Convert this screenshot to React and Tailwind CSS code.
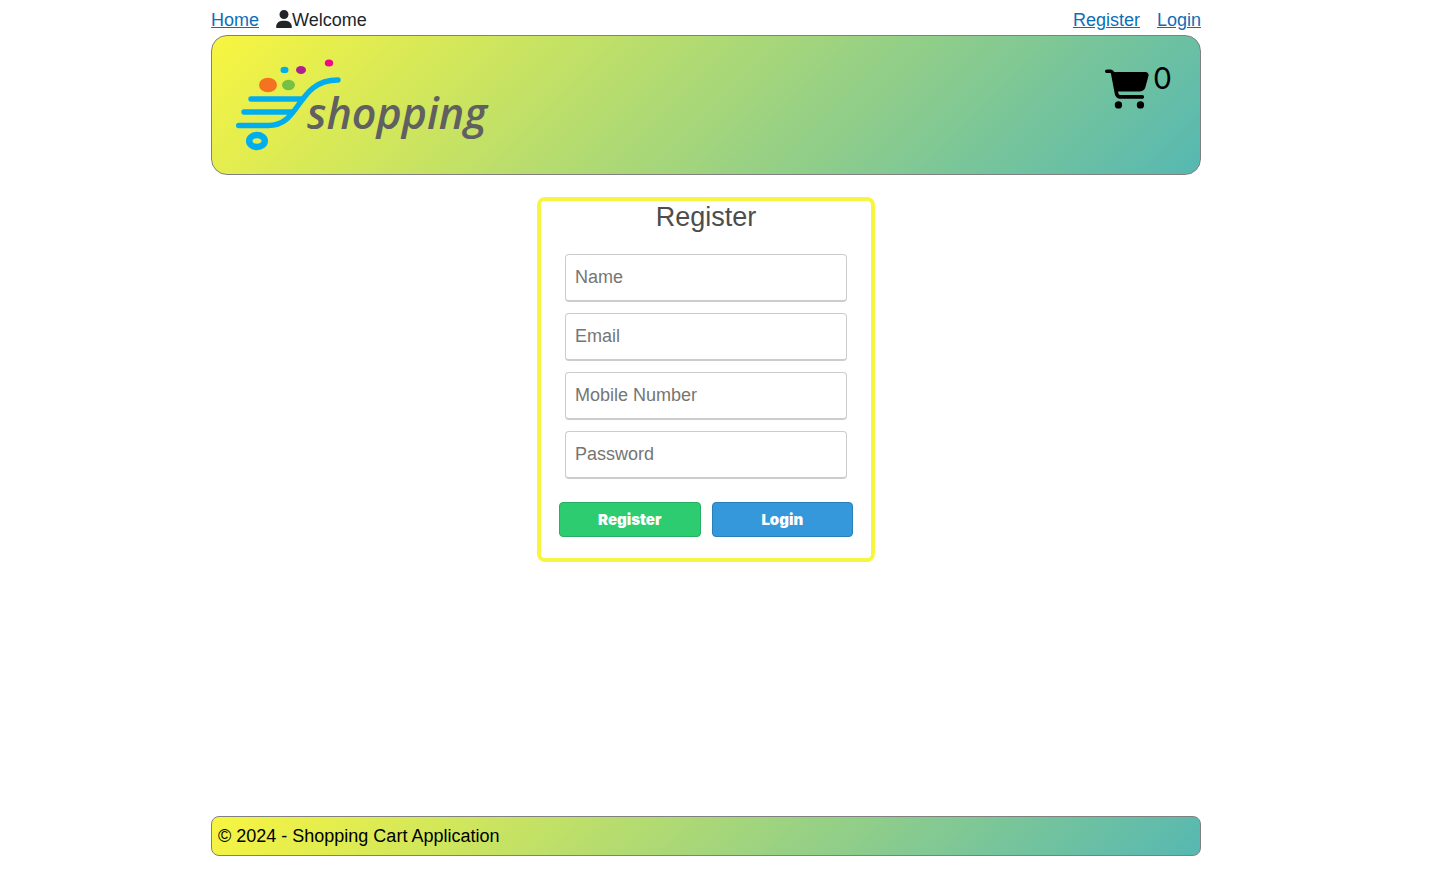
import { FaCartShopping, FaUser } from "react-icons/fa6";

function Logo() {
  return (
    <svg viewBox="0 0 264 104" className="h-[104px] w-[264px]" role="img" aria-label="shopping">
      <g fill="none" stroke="#00aeef" strokeWidth="5.400" strokeLinecap="round">
        <path d="M15 45H67M8 58H57M2.700 71.500H32C66 71.500 60 26 102 26" />
      </g>
      <ellipse cx="21" cy="87" rx="7.800" ry="6" fill="none" stroke="#00aeef" strokeWidth="6.500" />
      <ellipse cx="32" cy="31" rx="9" ry="7.300" fill="#f47321" />
      <ellipse cx="52.500" cy="31" rx="6.500" ry="5.300" fill="#76c043" />
      <ellipse cx="48.500" cy="16" rx="4" ry="3.300" fill="#00aeef" />
      <ellipse cx="65" cy="16" rx="5" ry="4" fill="#b01f8f" />
      <ellipse cx="93" cy="9" rx="4.200" ry="3.500" fill="#f0068c" />
      <text x="71" y="75" fill="#606060" className="font-['Open_Sans',sans-serif] text-[43px] font-semibold italic">
        shopping
      </text>
    </svg>
  );
}

const fields = [
  { id: "name", label: "Name", type: "text" },
  { id: "email", label: "Email", type: "email" },
  { id: "mobile", label: "Mobile Number", type: "tel" },
  { id: "password", label: "Password", type: "password" },
];

function NavLink({ children }) {
  return (
    <a href="#" className="text-[#0d6eb8] underline">
      {children}
    </a>
  );
}

export default function App() {
  return (
    <div className="min-h-screen bg-white pr-[26px] pb-[15px] font-['Liberation_Sans',Arial,sans-serif] text-lg text-[#212529] flex flex-col">
      <div className="mx-auto flex w-full max-w-[990px] flex-1 flex-col">
        <nav className="flex justify-between pt-[7px] pb-px leading-[27px]">
          <div className="flex gap-[17px]">
            <NavLink>Home</NavLink>
            <span className="flex items-start">
              <FaUser className="mt-[3px] h-[18px] w-4" />
              Welcome
            </span>
          </div>
          <div className="flex gap-[17px]">
            <NavLink>Register</NavLink>
            <NavLink>Login</NavLink>
          </div>
        </nav>

        <header className="flex items-start justify-between rounded-2xl border border-[#808080] bg-[linear-gradient(135deg,#f8f540,#56b8b2)] pt-[18px] pr-[28px] pb-4 pl-6">
          <Logo />
          <div className="flex items-start gap-1 pt-[6px] text-black">
            <FaCartShopping className="mt-[9px] h-10 w-[44px]" />
            <span className="font-['Inter',sans-serif] text-[30px] leading-[36px]">0</span>
          </div>
        </header>

        <main className="flex flex-1 justify-center pt-[22px] pb-8">
          <form
            onSubmit={(e) => e.preventDefault()}
            className="flex w-full max-w-[338px] flex-col self-start rounded-lg border-4 border-[#f8f540] px-[18px] pb-[21px]"
          >
            <h1 className="text-center text-[27px] leading-[32px] text-[#4d4d4d]">Register</h1>
            <div className="mt-[21px] flex flex-col gap-[11px] px-[6px]">
              {fields.map((f) => (
                <input
                  key={f.id}
                  id={f.id}
                  type={f.type}
                  aria-label={f.label}
                  placeholder={f.label}
                  className="h-12 w-full rounded border border-b-2 border-[#cccccc] bg-white px-[9px] placeholder:text-[#757575]"
                />
              ))}
            </div>
            <div className="mt-[23px] grid grid-cols-2 gap-[11px] font-['Inter',sans-serif] text-[15px] font-black text-white">
              <button type="submit" className="h-[35px] rounded border border-[#27ae60] bg-[#2ecc71]">
                Register
              </button>
              <button type="button" className="h-[35px] rounded border border-[#2980b9] bg-[#3498db]">
                Login
              </button>
            </div>
          </form>
        </main>

        <footer className="rounded-lg border border-[#808080] bg-[linear-gradient(135deg,#f8f540,#56b8b2)] px-[6px] py-[5px] leading-[28px] text-black">
          © 2024 - Shopping Cart Application
        </footer>
      </div>
    </div>
  );
}
